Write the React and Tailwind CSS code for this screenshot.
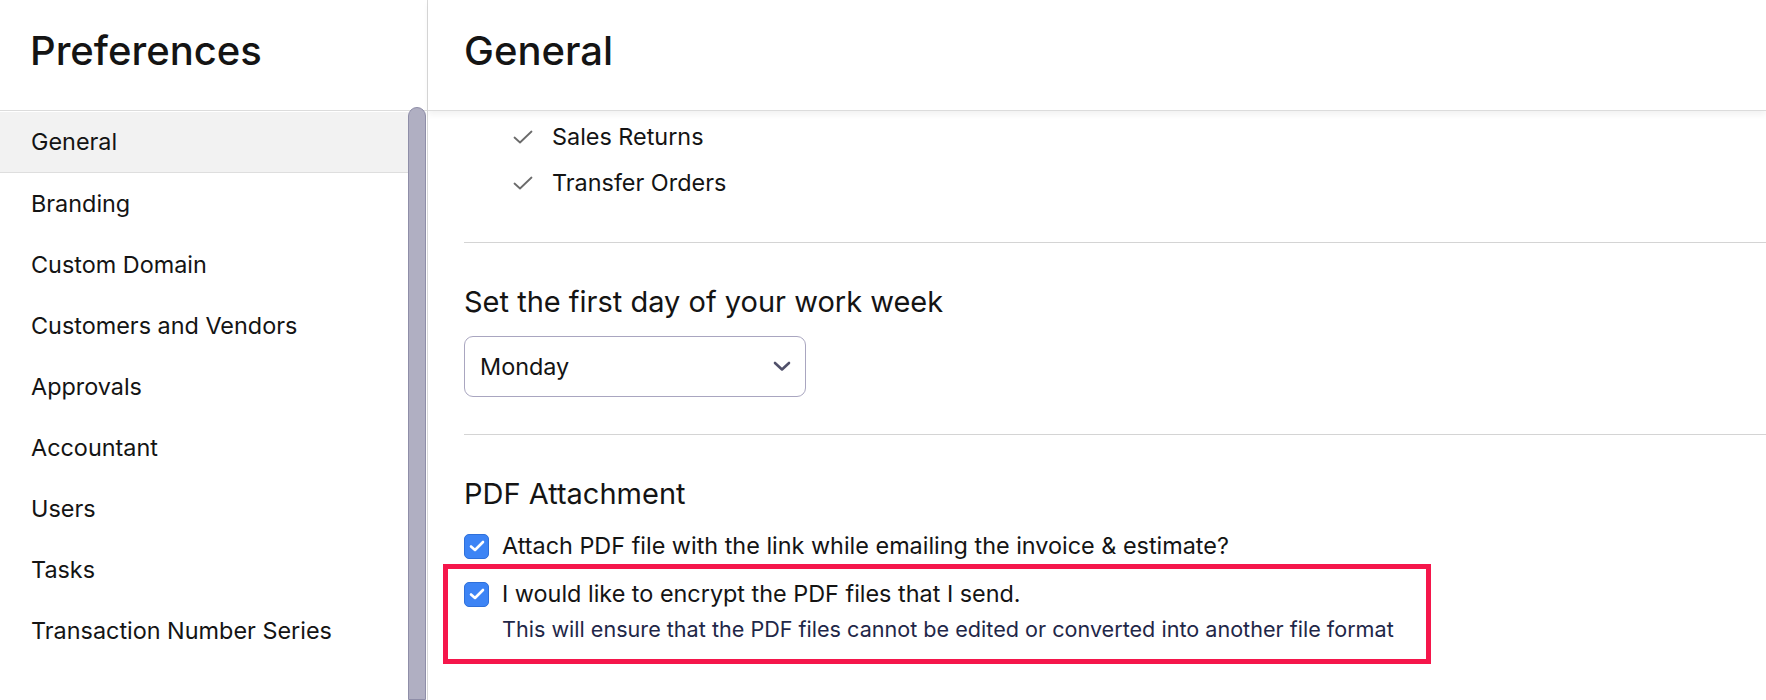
const navItems = [
  'General',
  'Branding',
  'Custom Domain',
  'Customers and Vendors',
  'Approvals',
  'Accountant',
  'Users',
  'Tasks',
  'Transaction Number Series',
]

function Tick() {
  return (
    <svg width="20" height="14" viewBox="0 0 20 14" fill="none" className="shrink-0">
      <path d="M1.5 7.5 L7 12.5 L18.5 1.5" stroke="#6b6b6b" strokeWidth="1.8" strokeLinecap="round" strokeLinejoin="round" />
    </svg>
  )
}

function Checkbox() {
  return (
    <span className="w-[25px] h-[25px] rounded-[5px] bg-[#3d84f5] border border-[#2f70da] flex items-center justify-center shrink-0">
      <svg width="16" height="12" viewBox="0 0 16 12" fill="none">
        <path d="M2 6.5 L6 10 L14 2" stroke="white" strokeWidth="2.6" strokeLinecap="round" strokeLinejoin="round" />
      </svg>
    </span>
  )
}

export default function App() {
  return (
    <div className="h-[700px] w-full flex overflow-hidden bg-white text-[#141414] font-['Inter',sans-serif]">
      {/* sidebar */}
      <aside className="w-[428px] shrink-0 flex flex-col border-r border-[#d9d9d9]">
        <div className="h-[111px] shrink-0 border-b border-[#dcdcdc] pl-[30px] pt-[27px]">
          <h1 className="text-[40px] leading-[48px] font-medium">Preferences</h1>
        </div>
        <div className="flex flex-1 min-h-0">
          <nav className="flex-1 pt-[1px]">
            {navItems.map(item => (
              <div
                key={item}
                className={item === 'General'
                  ? 'h-[61px] flex items-center pl-[31px] text-[23.4px] bg-[#f2f2f2] border-b border-[#dedede]'
                  : 'h-[61px] flex items-center pl-[31px] text-[23.4px]'}
              >
                {item}
              </div>
            ))}
          </nav>
          <div className="w-[19px] shrink-0 -mt-[4px]">
            <div className="w-[18px] h-full rounded-t-full bg-[#b0afc2] border border-[#8f8ea8]" />
          </div>
        </div>
      </aside>

      {/* main */}
      <main className="flex-1 flex flex-col min-w-0">
        <div className="h-[111px] shrink-0 border-b border-[#dcdcdc] pl-[36px] pt-[27px] shadow-[0_4px_6px_rgba(0,0,0,0.05)] relative">
          <h2 className="text-[40px] leading-[48px] font-medium">General</h2>
        </div>
        <div className="pl-[36px] pt-[3px]">
          <ul className="pl-[49px]">
            {['Sales Returns', 'Transfer Orders'].map(t => (
              <li key={t} className="flex items-center gap-[19px] h-[46px] text-[23.4px]">
                <Tick />
                <span>{t}</span>
              </li>
            ))}
          </ul>

          <div className="mt-[36px] border-t border-[#d4d4d4]" />

          <h3 className="mt-[41px] text-[29px] leading-[36px]">Set the first day of your work week</h3>
          <div className="mt-[16px] w-[342px] h-[61px] rounded-[9px] border border-[#a9a6c0] flex items-center justify-between pl-[15px] pr-[14px] text-[23.4px]">
            <span>Monday</span>
            <svg width="18" height="11" viewBox="0 0 18 11" fill="none">
              <path d="M2 2 L9 8.5 L16 2" stroke="#50506a" strokeWidth="2.6" strokeLinecap="round" strokeLinejoin="round" />
            </svg>
          </div>

          <div className="mt-[37px] border-t border-[#d4d4d4]" />

          <h3 className="mt-[41px] text-[29px] leading-[36px]">PDF Attachment</h3>
          <label className="mt-[19px] flex items-center gap-[13px] h-[30px] text-[23.4px]">
            <Checkbox />
            <span>Attach PDF file with the link while emailing the invoice &amp; estimate?</span>
          </label>

          <div className="mt-[3px] -ml-[21px] w-[988px] border-[5px] border-[#f5164b] pl-[16px] pt-[10px] pb-[16px]">
            <label className="flex items-center gap-[13px] h-[30px] text-[23.4px]">
              <Checkbox />
              <span>I would like to encrypt the PDF files that I send.</span>
            </label>
            <p className="mt-[6px] pl-[38px] text-[21.6px] leading-[28px] text-[#1f2748]">
              This will ensure that the PDF files cannot be edited or converted into another file format
            </p>
          </div>
        </div>
      </main>
    </div>
  )
}
